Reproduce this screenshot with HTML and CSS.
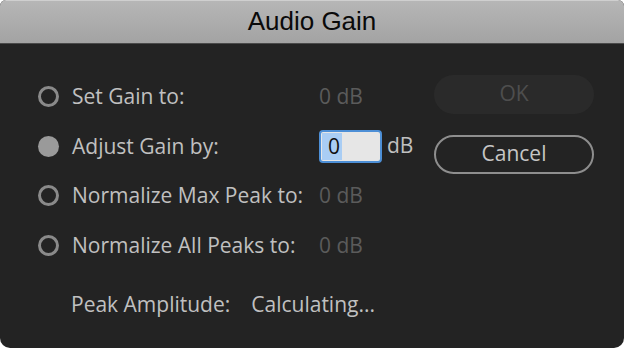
FILE: index.html
```html
<!DOCTYPE html>
<html lang="en">
<head>
    <meta charset="UTF-8">
    <title>Audio Gain</title>
    <link rel="stylesheet" href="styles.css">
</head>
<body>

<div class="dialog">
    <div class="titlebar">Audio Gain</div>
    <div class="dialog-body">
        <div class="left">
            <div class="options">
                <span class="radio"></span>
                <span class="label">Set Gain to:</span>
                <span class="value">0 dB</span>

                <span class="radio checked"></span>
                <span class="label">Adjust Gain by:</span>
                <span class="value active">
                    <span class="field"><span class="selected">0</span></span>
                    <span class="unit">dB</span>
                </span>

                <span class="radio"></span>
                <span class="label">Normalize Max Peak to:</span>
                <span class="value">0 dB</span>

                <span class="radio"></span>
                <span class="label">Normalize All Peaks to:</span>
                <span class="value">0 dB</span>
            </div>
            <div class="peak">
                <span>Peak Amplitude:</span>
                <span>Calculating...</span>
            </div>
        </div>
        <div class="buttons">
            <button class="btn ok" disabled>OK</button>
            <button class="btn cancel">Cancel</button>
        </div>
    </div>
</div>

</body>
</html>
```

FILE: styles.css
```css
body {
    margin: 0;
    width: 624px;
    height: 348px;
    background: #ffffff;
    overflow: hidden;
}

.dialog {
    width: 624px;
    height: 348px;
    background: #232323;
    border-radius: 6px 6px 10px 10px;
    overflow: hidden;
    font-family: "Open Sans", "Noto Sans", sans-serif;
    font-weight: 500;
}

.titlebar {
    box-sizing: border-box;
    height: 44px;
    border-top: 1px solid #cfcfcf;
    border-bottom: 1px solid #4a4a4a;
    background: linear-gradient(#b6b6b6, #a3a3a3);
    color: #0a0a0a;
    font-family: "Liberation Sans", Arial, sans-serif;
    font-weight: 400;
    font-size: 26px;
    line-height: 41px;
    text-align: center;
}

.dialog-body {
    display: flex;
    padding: 28px 30px 0 38px;
}

.left {
    width: 380px;
}

.options {
    display: grid;
    grid-template-columns: 21px 234px auto;
    grid-auto-rows: 49.5px;
    column-gap: 13px;
    align-items: center;
    font-size: 21px;
}

.radio {
    width: 21px;
    height: 21px;
    box-sizing: border-box;
    border: 3px solid #8a8a8a;
    border-radius: 50%;
}

.radio.checked {
    border: none;
    background: #9a9a9a;
}

.label {
    color: #c0c0c0;
    margin-top: -1px;
}

.value {
    color: #5b5b5b;
    margin-top: -1px;
}

.value.active {
    display: flex;
    align-items: center;
    gap: 5px;
    margin-top: 0;
}

.field {
    display: flex;
    align-items: center;
    width: 63px;
    height: 33px;
    box-sizing: border-box;
    padding-left: 1px;
    border: 2px solid #4d8fd6;
    border-radius: 4px;
    background: #e6e6e6;
}

.selected {
    display: block;
    width: 20px;
    height: 27px;
    line-height: 27px;
    padding-left: 6px;
    box-sizing: border-box;
    background: #a9cdf4;
    color: #101010;
    font-size: 21px;
}

.unit {
    color: #c0c0c0;
    margin-top: -2px;
}

.peak {
    display: flex;
    gap: 21px;
    margin-top: 20px;
    padding-left: 33px;
    color: #c0c0c0;
    font-size: 21px;
}

.buttons {
    display: flex;
    flex-direction: column;
    gap: 21px;
    margin-left: auto;
    padding-top: 3px;
}

.btn {
    width: 160px;
    height: 39px;
    border-radius: 20px;
    font-family: "Open Sans", "Noto Sans", sans-serif;
    font-weight: 500;
    font-size: 21px;
    padding: 0 0 3px;
}

.ok {
    background: #2a2a2a;
    border: none;
    color: #4e4e4e;
}

.cancel {
    background: transparent;
    border: 2px solid #8e8e8e;
    color: #c6c6c6;
}
```
